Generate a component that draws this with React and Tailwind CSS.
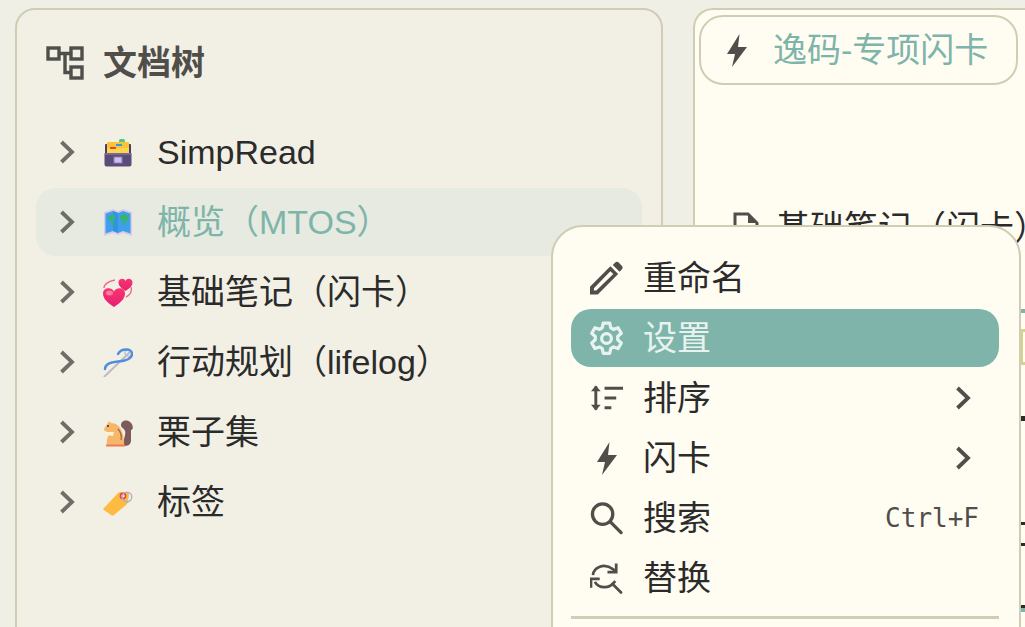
import React from 'react';

const uiFont = '"Liberation Sans","Noto Sans CJK SC",sans-serif';

const Chevron = ({ className }) => (
  <svg viewBox="0 0 16 24" className={className} fill="none" stroke="currentColor" strokeWidth="3.8">
    <path d="M2.500 2l10.500 10-10.500 10" />
  </svg>
);

const ArchiveEmoji = () => (
  <svg viewBox="0 0 30 30" className="w-[30px] h-[30px]">
    <rect x="16" y="2" width="6" height="4" rx="1.500" fill="#4fc97a" />
    <rect x="2" y="7" width="26" height="14" rx="1" fill="#4a3f66" />
    <rect x="4" y="5" width="22" height="12" rx="1" fill="#f9c33c" />
    <rect x="4" y="11" width="22" height="5" fill="#ffd54a" />
    <rect x="13" y="7" width="6" height="2" fill="#3d97d9" />
    <rect x="7" y="10" width="6" height="2" fill="#e8423f" />
    <rect x="1.500" y="16" width="27" height="13.500" rx="2" fill="#5a4c78" />
    <rect x="1.500" y="16" width="27" height="2" fill="#78689a" />
    <rect x="11" y="20" width="8" height="6" fill="#cdbff0" stroke="#8d7cb4" />
  </svg>
);

const MapEmoji = () => (
  <svg viewBox="0 0 30 30" className="w-[30px] h-[30px]">
    <path d="M1 5l9-3 5 2 5-2 9 3v24l-9-3-5 2-5-2-9 3z" fill="#d9cbe8" />
    <path d="M2.500 6.500l7.500-2.500 5 2 5-2 7.500 2.500v20l-7.500-2.500-5 2-5-2-7.500 2.500z" fill="#3e9fec" />
    <path d="M10 4l5 2v20l-5-2z" fill="#3492e2" />
    <path d="M5 9l6-1 2 3-3 2 1 5-2 1-1-5-3-2zM17 9l4-2 5 2-1 5-3 0 0 4-2 0-1-5-2-1z" fill="#38b472" />
  </svg>
);

const HeartsEmoji = () => (
  <svg viewBox="0 0 30 30" className="w-[30px] h-[30px]">
    <defs>
      <linearGradient id="heart" x1="0" y1="0" x2="0" y2="1">
        <stop offset="0" stopColor="#f7356f" />
        <stop offset="1" stopColor="#e81f72" />
      </linearGradient>
    </defs>
    <path d="M1 11c0-4 5-7 11-8" fill="none" stroke="#f0648f" strokeWidth="1.400" />
    <path d="M28 10c1 4-1 8-5 10" fill="none" stroke="#f0648f" strokeWidth="1.400" />
    <path d="M22.500 14c-4-3-7-5-7-8.500 0-4 5.500-5 7-1.500 1.500-3.500 7-2.500 7 1.500 0 3.500-3 5.500-7 8.500z" fill="url(#heart)" />
    <path d="M11 30C5 26 0 22 0 16.500c0-6 8.500-7 11-2 2.500-5 11-4 11 2C22 22 17 26 11 30z" fill="url(#heart)" />
    <ellipse cx="6.500" cy="16" rx="3.500" ry="2.500" fill="#fb7ba0" />
  </svg>
);

const NeedleEmoji = () => (
  <svg viewBox="0 0 30 30" className="w-[30px] h-[30px]">
    <path d="M1 30L27 5" fill="none" stroke="#bdb9c9" strokeWidth="2" />
    <circle cx="25.500" cy="6" r="3.500" fill="none" stroke="#c5c1cf" strokeWidth="1.600" />
    <path d="M15 7c3-6 14-6 14 0 0 6-8 7-14 7.500C9 15 2 16 2 22" fill="none" stroke="#4e8edd" strokeWidth="2.400" strokeLinecap="round" />
  </svg>
);

const SquirrelEmoji = () => (
  <svg viewBox="0 0 30 30" className="w-[30px] h-[30px]">
    <path d="M20 29c5 0 8-1 8-6V13c3 0 2-6-1-8-4-3-9-1-9 3 0 3 3 3 4 6s-1 6-2 15z" fill="#7d5a5d" />
    <path d="M4 28c-1-5 1-9 3-12l-5-2c-2-2 0-4 1-5l3-5 2 2c5 0 9 3 11 9 2 5 2 9 2 13z" fill="#f6b66c" />
    <path d="M3 27.500h19v2H3z" fill="#ef7b4c" />
    <path d="M3 15h8l-1 4-6-1z" fill="#fff0d0" />
    <path d="M15 12c3 3 4 8 3 11" fill="none" stroke="#a86a3b" strokeWidth="1.400" />
    <circle cx="5" cy="9" r="1" fill="#3a2a22" />
  </svg>
);

const TagEmoji = () => (
  <svg viewBox="0 0 30 30" className="w-[30px] h-[30px]">
    <path d="M1 21L15 6c1-1 2-1 4-1l5 0c2 0 2 1 2 3l-1 7c0 1-1 2-2 3L11 28c-1 1-2 1-3 0l-7-5c-1-1-1-1 0-2z" fill="#fdbb41" />
    <circle cx="20" cy="9" r="2.600" fill="#f6f0e0" stroke="#e8423f" strokeWidth="1.600" />
    <circle cx="24" cy="10" r="4.800" fill="none" stroke="#b3aec5" strokeWidth="1.400" />
  </svg>
);

const Bolt = ({ className }) => (
  <svg viewBox="0 0 20 33" className={className}>
    <path d="M12.500 0L0 20h8L5 33 20 13h-9z" fill="#504e4a" />
  </svg>
);

const TreeIcon = () => (
  <svg viewBox="0 0 38 34" className="w-[38px] h-[34px]" fill="none" stroke="#504e4a" strokeWidth="3.400">
    <rect x="2" y="2" width="11" height="11" />
    <rect x="25" y="2" width="11" height="11" />
    <rect x="25" y="21" width="11" height="11" />
    <path d="M13 7.500h12M19 7.500V26.500h6" />
  </svg>
);

const PencilIcon = () => (
  <svg viewBox="0 0 34 34" className="w-[34px] h-[34px]">
    <path d="M0 34v-8L21 5l8 8L8 34z M4 27.500V30h2.500L24 13l-3-3z" fill="#504e4a" fillRule="evenodd" />
    <path d="M23.500 3.500l2-2c1.500-1.500 3-1.500 4.500 0l2.500 2.500c1.500 1.500 1.500 3 0 4.500l-2 2z" fill="#504e4a" />
  </svg>
);

const GearIcon = () => (
  <svg viewBox="0 0 24 24" className="w-[39px] h-[39px] -m-[3px]" fill="none" stroke="#e8f3f0" strokeWidth="2" strokeLinejoin="round">
    <path d="M10 2.500h4l.6 2.900 1.700 1 2.800-1 2 3.400-2.200 2 0 2 2.200 2-2 3.400-2.800-1-1.700 1-.6 2.900h-4l-.6-2.900-1.700-1-2.800 1-2-3.400 2.200-2 0-2-2.200-2 2-3.400 2.800 1 1.700-1z" />
    <circle cx="12" cy="12" r="3" />
  </svg>
);

const SortIcon = () => (
  <svg viewBox="0 0 34 30" className="w-[34px] h-[30px]" fill="none" stroke="#504e4a" strokeWidth="3">
    <path d="M6 3v24" />
    <path d="M1 8l5-6 5 6zM1 22l5 6 5-6z" fill="#504e4a" strokeWidth="0" />
    <path d="M15 5h19M15 15h12M15 25h7" />
  </svg>
);

const SearchIcon = () => (
  <svg viewBox="0 0 34 34" className="w-[34px] h-[34px]" fill="none" stroke="#504e4a" strokeWidth="3.400">
    <circle cx="13" cy="13" r="10.500" />
    <path d="M21 21l11 11" strokeLinecap="round" />
  </svg>
);

const ReplaceIcon = () => (
  <svg viewBox="0 0 34 34" className="w-[34px] h-[34px]" fill="none" stroke="#504e4a" strokeWidth="2.800">
    <path d="M3 14C4 6 14 1 24 8l2 3" />
    <path d="M18 11h9V2" />
    <path d="M26 20C20 29 9 28 5 21" />
    <path d="M1 27v-9h9" />
    <path d="M23 23l9 9" strokeLinecap="round" />
  </svg>
);

const treeItems = [
  { icon: <ArchiveEmoji />, label: 'SimpRead' },
  { icon: <MapEmoji />, label: '概览（MTOS）', active: true },
  { icon: <HeartsEmoji />, label: '基础笔记（闪卡）' },
  { icon: <NeedleEmoji />, label: '行动规划（lifelog）' },
  { icon: <SquirrelEmoji />, label: '栗子集' },
  { icon: <TagEmoji />, label: '标签' },
];

const menuItems = [
  { icon: <PencilIcon />, label: '重命名' },
  { icon: <GearIcon />, label: '设置', active: true },
  { icon: <SortIcon />, label: '排序', arrow: true },
  { icon: <Bolt className="w-[20px] h-[33px]" />, label: '闪卡', arrow: true },
  { icon: <SearchIcon />, label: '搜索', hint: 'Ctrl+F' },
  { icon: <ReplaceIcon />, label: '替换' },
];

export default function App() {
  return (
    <div
      className="relative h-screen overflow-hidden bg-[#f0efe6] flex gap-[30px] pl-[15px] pt-[8px] text-[34px] text-[#2b2b2b]"
      style={{ fontFamily: uiFont }}
    >
      {/* 文档树 */}
      <div className="w-[648px] shrink-0 h-[700px] bg-[#f2f0e5] border-2 border-[#d0cdb4] rounded-[20px] px-[19px]">
        <div className="flex items-center gap-[19px] h-[108px] pl-[10px] pb-[2px] text-[#504e4a] font-bold">
          <TreeIcon />
          <span>文档树</span>
        </div>
        <div className="flex flex-col gap-[2px]">
          {treeItems.map((item) => (
            <div
              key={item.label}
              className={`flex items-center h-[68px] pl-[23px] rounded-[20px] ${item.active ? 'bg-[#e6eae0] text-[#7eb4aa]' : ''}`}
            >
              <Chevron className="w-[16px] h-[24px] shrink-0 text-[#6f6d68]" />
              <div className="ml-[28px] w-[30px] shrink-0">{item.icon}</div>
              <span className="ml-[24px] whitespace-nowrap">{item.label}</span>
            </div>
          ))}
        </div>
      </div>

      {/* 右侧文档 */}
      <div className="flex-1 h-[700px] bg-[#fffdf2] border-2 border-r-0 border-[#d0cdb4] rounded-tl-[20px] pl-[4px] pt-[5px] min-w-0">
        <div className="w-[319px] h-[70px] border-2 border-[#d0cdb4] rounded-[24px] flex items-center pl-[26px]">
          <Bolt className="w-[20px] h-[33px] shrink-0" />
          <span className="ml-[26px] text-[#7eb4aa] whitespace-nowrap">逸码-专项闪卡</span>
        </div>
        <div className="flex items-center h-[44px] mt-[121px] pl-[34px] whitespace-nowrap">
          <svg viewBox="0 0 26 32" className="w-[26px] h-[32px] shrink-0">
            <path d="M2 2h13l9 9v19H2z" fill="none" stroke="#504e4a" strokeWidth="3" />
            <path d="M15 2v9h9z" fill="#504e4a" />
          </svg>
          <span className="ml-[17px]">基础笔记（闪卡）</span>
        </div>
        {/* 菜单右侧露出的正文边缘 */}
        <div className="ml-[322px] w-[4px] flex flex-col">
          <div className="mt-[59px] h-[4px] bg-[#7eb4aa]" />
          <div className="mt-[16px] h-[36px] border-l-2 border-y-[3px] border-[#d4d38a]" />
          <div className="mt-[51px] h-[5px] bg-[#2b2b2b]" />
          <div className="mt-[101px] h-[3px] bg-[#2b2b2b]" />
          <div className="mt-[18px] h-[3px] bg-[#2b2b2b]" />
          <div className="mt-[59px] h-[3px] bg-[#2b2b2b]" />
          <div className="h-[4px] bg-[#7eb4aa]" />
        </div>
      </div>

      {/* 右键菜单 */}
      <div className="absolute left-[551px] top-[225px] w-[470px] h-[500px] bg-[#fffdf2] border-2 border-[#d0cdb4] rounded-[32px] pl-[18px] pr-[20px] pt-[22px]">
        <div className="flex flex-col gap-[2px]">
          {menuItems.map((item) => (
            <div
              key={item.label}
              className={`flex items-center h-[58px] pl-[19px] pr-[20px] rounded-[20px] ${item.active ? 'bg-[#7eb4aa] text-[#e8f3f0]' : ''}`}
            >
              <div className="w-[33px] flex justify-center shrink-0">{item.icon}</div>
              <span className="ml-[20px]">{item.label}</span>
              {item.arrow && <Chevron className="ml-auto mr-[8px] w-[16px] h-[24px] text-[#504e4a]" />}
              {item.hint && (
                <span className="ml-auto text-[26px] text-[#504e4a]" style={{ fontFamily: '"DejaVu Sans Mono",monospace' }}>
                  {item.hint}
                </span>
              )}
            </div>
          ))}
        </div>
        <div className="h-[3px] bg-[#d0cdb4] mt-[9px]" />
      </div>
    </div>
  );
}
